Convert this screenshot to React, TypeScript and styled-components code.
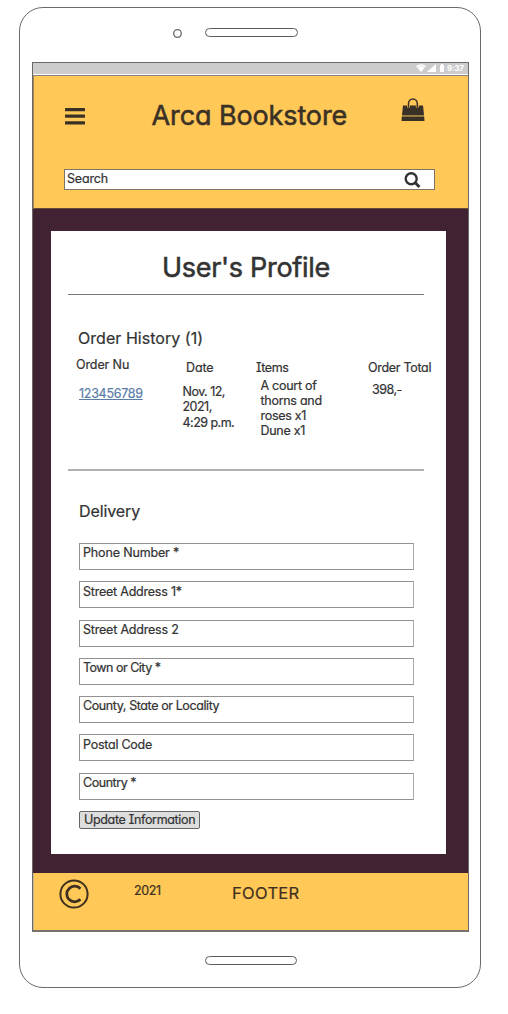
import React from 'react';
import styled, { createGlobalStyle } from 'styled-components';

const GlobalStyle = createGlobalStyle`
  *, *::before, *::after { box-sizing: border-box; }
  body {
    margin: 0;
    background: #fff;
    color: #333;
    font-family: Inter, "Liberation Sans", sans-serif;
    font-feature-settings: "cv11" 1, "cv08" 1, "calt" 0;
  }
`;

const Phone = styled.div`
  width: 462px;
  height: 981px;
  margin: 7px 0 0 19px;
  padding: 0 12px;
  border: 1px solid #6a6a6c;
  border-radius: 24px;
  background: #fff;
  display: flex;
  flex-direction: column;
`;

const TopHardware = styled.div`
  height: 54px;
  flex: none;
  display: flex;
  align-items: flex-start;
  padding: 20px 0 0 141px;
`;

const CameraIcon = styled.svg`
  width: 9px;
  height: 9px;
  margin-top: 1px;
`;

const Slot = styled.span<{ $w: number }>`
  width: ${p => p.$w}px;
  height: 9px;
  border: 1px solid #5c5c5c;
  border-radius: 5px;
`;

const Speaker = styled(Slot)`
  margin-left: 23px;
`;

const BottomHardware = styled.div`
  padding: 24px 0 0 173px;
  display: flex;
`;

const Screen = styled.div`
  width: 437px;
  height: 870px;
  flex: none;
  display: flex;
  flex-direction: column;
  border: 1px solid #6b6764;
  border-bottom: 2px solid #77736a;
`;

const StatusBar = styled.div`
  height: 13px;
  flex: none;
  display: flex;
  align-items: flex-start;
  justify-content: flex-end;
  padding-right: 4px;
  background: #ccc;
  border-bottom: 1px solid #85837e;
  box-shadow: inset 0 -1px #fff;
`;

const Clock = styled.span`
  width: 17px;
  margin-left: 3px;
  color: #fff;
  font-size: 8px;
  line-height: 10px;
  font-weight: 700;
  letter-spacing: -0.3px;
  white-space: nowrap;
`;

const Header = styled.header`
  height: 133px;
  flex: none;
  background: #ffc857;
  border-left: 1px solid #a08b60;
  border-bottom: 1px solid #6b4a3a;
`;

const HeaderRow = styled.div`
  display: flex;
  height: 93px;
  padding-left: 31px;
`;

const MenuIcon = styled.svg`
  width: 20px;
  height: 17px;
  margin-top: 32px;
`;

const BagIcon = styled.svg`
  width: 24px;
  height: 24px;
  margin: 22px 0 0 auto;
`;

const BagSlot = styled.div`
  margin: 0 43px 0 auto;
  display: flex;
`;

const Txt = styled.span<{ $size?: number; $ls?: number; $lh?: number }>`
  display: block;
  font-size: ${p => p.$size ?? 12.5}px;
  line-height: ${p => p.$lh ?? 15}px;
  letter-spacing: ${p => p.$ls ?? 0}px;
  white-space: nowrap;
  -webkit-text-stroke: ${p => ((p.$size ?? 0) > 20 ? 0.55 : 0.22)}px currentColor;
`;

const Brand = styled(Txt)`
  margin: 23px 0 0 66.6px;
  color: #3a3126;
`;

const SearchBox = styled.div`
  display: flex;
  justify-content: space-between;
  width: 371px;
  height: 21px;
  margin-left: 30px;
  padding: 1px 13px 0 2px;
  background: #fff;
  border: 1px solid #7d7564;
`;

const Main = styled.main`
  height: 664px;
  flex: none;
  padding: 22px 22px 19px 18px;
  background: #402233;
`;

const Card = styled.section`
  width: 395px;
  height: 623px;
  background: #fff;
  display: flex;
  flex-direction: column;
`;

const PageTitle = styled(Txt)`
  margin: 21px 0 0 111px;
`;

const Rule = styled.hr<{ $top: number; $light?: boolean }>`
  width: 356px;
  height: ${p => (p.$light ? 2 : 1)}px;
  flex: none;
  margin: ${p => p.$top}px 0 0 17px;
  border: 0;
  background: ${p => (p.$light ? '#b0b0b0' : '#777')};
`;

const Orders = styled.div`
  height: 174px;
  padding: 33px 0 0 25px;
`;

const SectionTitle = styled(Txt)`
  margin-left: 2px;
`;

const OrderGrid = styled.div`
  display: grid;
  grid-template-columns: 106px 74px 112px 1fr;
  margin-top: 9px;
`;

const OrderColumn = styled.div<{ $top?: number; $head?: number; $gap: number; $indent?: number }>`
  display: flex;
  flex-direction: column;
  align-items: flex-start;
  gap: ${p => p.$gap}px;
  padding-top: ${p => p.$top ?? 3}px;
  & > :first-child { margin-left: ${p => p.$head ?? 0}px; }
  & > :last-child { margin-left: ${p => p.$indent ?? 0}px; }
`;

const OrderLink = styled(Txt)`
  color: #5a7da8;
  text-decoration: underline;
  text-decoration-thickness: 1px;
  text-underline-offset: 1px;
`;

const Delivery = styled.form`
  padding: 30px 0 0 28px;
  display: flex;
  flex-direction: column;
`;

const Fields = styled.div`
  margin-top: 22px;
  display: flex;
  flex-direction: column;
  gap: 11.3px;
`;

const Field = styled.div`
  width: 334.5px;
  height: 27px;
  padding: 1.3px 0 0 3px;
  border: 1px solid #929292;
  border-right-color: #aaa;
`;

const UpdateButton = styled.button`
  width: 121px;
  height: 18px;
  margin-top: 11px;
  padding: 0 0 0 4px;
  border: 1px solid #666;
  border-radius: 2px;
  background: #ddd;
  color: #333;
  font-family: inherit;
  font-feature-settings: inherit;
  text-align: left;
`;

const Footer = styled.footer`
  flex: 1;
  display: flex;
  align-items: flex-start;
  border-left: 1px solid #c9b98f;
  padding-left: 25px;
  background: #ffc857;
  color: #3e2f20;
`;

const CopyrightIcon = styled.svg`
  width: 30px;
  height: 30px;
  margin-top: 6px;
`;

const Year = styled(Txt)`
  width: 98px;
  margin: 10px 0 0 45px;
`;

const FooterLabel = styled(Txt)`
  margin-top: 10px;
`;

const fields: { label: string; ls: number }[] = [
  { label: 'Phone Number *', ls: -0.15 },
  { label: 'Street Address 1*', ls: -0.22 },
  { label: 'Street Address 2', ls: -0.2 },
  { label: 'Town or City *', ls: -0.5 },
  { label: 'County, State or Locality', ls: -0.4 },
  { label: 'Postal Code', ls: -0.25 },
  { label: 'Country *', ls: -0.45 },
];

export default function App() {
  return (
    <>
      <GlobalStyle />
      <Phone>
        <TopHardware>
          <CameraIcon viewBox="0 0 9 9" fill="none" stroke="#666">
            <circle cx="4.5" cy="4.5" r="3.8" strokeWidth="1.3" />
          </CameraIcon>
          <Speaker $w={93} />
        </TopHardware>
        <Screen>
          <StatusBar>
            <svg width="28" height="10" viewBox="0 0 28 10" fill="#fff">
              <path d="M0 3Q5-.6 10 3L5 9Z" />
              <path d="M1.2 4.2Q5 1.5 8.8 4.2" fill="none" stroke="#ccc" strokeWidth=".5" />
              <path d="M11 9H20V1Z" />
              <path d="M24 2h1V1h2v1h1v7h-4Z" />
            </svg>
            <Clock>9:37</Clock>
          </StatusBar>
          <Header>
            <HeaderRow>
              <MenuIcon viewBox="0 0 20 17" fill="#3a3126">
                <rect width="20" height="3.2" rx=".5" />
                <rect y="6.6" width="20" height="3.2" rx=".5" />
                <rect y="13.2" width="20" height="3.2" rx=".5" />
              </MenuIcon>
              <Brand $size={27} $lh={34} $ls={-0.12}>Arca Bookstore</Brand>
              <BagSlot>
                <BagIcon viewBox="0 0 24 24">
                  <path d="M2 7.5H22L23 17H1Z" fill="#3a3126" />
                  <path d="M.8 18.5H23.2L23.5 23H.5Z" fill="#3a3126" />
                  <path d="M1 17.3H23v1H1Z" fill="#77643c" />
                  <path d="M7.5 9.5V5.5a4.3 4.5 0 0 1 8.8 0V9.5" fill="none" stroke="#ffc857" strokeWidth="2.9" />
                  <path d="M7.5 9.5V5.5a4.3 4.5 0 0 1 8.8 0V9.5" fill="none" stroke="#3a3126" strokeWidth="1.5" />
                </BagIcon>
              </BagSlot>
            </HeaderRow>
            <SearchBox>
              <Txt $ls={-0.15}>Search</Txt>
              <svg width="17" height="18" viewBox="0 -1 17 18" fill="none" stroke="#333">
                <circle cx="7.2" cy="6.7" r="5.5" strokeWidth="2.4" />
                <path d="M11.2 10.7L15.5 15" strokeWidth="2.9" />
              </svg>
            </SearchBox>
          </Header>
          <Main>
            <Card>
              <PageTitle $size={27} $lh={32} $ls={-0.3}>User's Profile</PageTitle>
              <Rule $top={10} />
              <Orders>
                <SectionTitle $size={16} $lh={20} $ls={0.04}>Order History (1)</SectionTitle>
                <OrderGrid>
                  <OrderColumn $top={0} $gap={14} $indent={3}>
                    <Txt $ls={-0.1}>Order Nu</Txt>
                    <OrderLink $ls={-0.28}>123456789</OrderLink>
                  </OrderColumn>
                  <OrderColumn $gap={9} $head={4} $indent={0.5}>
                    <Txt $ls={-0.1}>Date</Txt>
                    <Txt $lh={15.3} $ls={-0.52}>Nov. 12,<br />2021,<br />4:29 p.m.</Txt>
                  </OrderColumn>
                  <OrderColumn $gap={3} $indent={4.5}>
                    <Txt $ls={-0.4}>Items</Txt>
                    <Txt $ls={-0.28}>A court of<br />thorns and<br />roses x1<br />Dune x1</Txt>
                  </OrderColumn>
                  <OrderColumn $gap={7} $indent={4}>
                    <Txt $ls={-0.3}>Order Total</Txt>
                    <Txt $ls={-0.5}>398,-</Txt>
                  </OrderColumn>
                </OrderGrid>
              </Orders>
              <Rule $top={0} $light />
              <Delivery>
                <Txt $size={16} $lh={20} $ls={-0.1}>Delivery</Txt>
                <Fields>
                  {fields.map(f => (
                    <Field key={f.label}><Txt $ls={f.ls}>{f.label}</Txt></Field>
                  ))}
                </Fields>
                <UpdateButton type="button"><Txt $ls={-0.33}>Update Information</Txt></UpdateButton>
              </Delivery>
            </Card>
          </Main>
          <Footer>
            <CopyrightIcon viewBox="0 0 30 30" fill="none" stroke="#3e3020">
              <circle cx="15" cy="15" r="13.6" strokeWidth="2" />
              <path d="M21.4 9.8A7.8 7.8 0 1 0 21.4 20.2" strokeWidth="2.8" />
            </CopyrightIcon>
            <Year $ls={-0.4}>2021</Year>
            <FooterLabel $size={16.5} $lh={20} $ls={0.3}>FOOTER</FooterLabel>
          </Footer>
        </Screen>
        <BottomHardware><Slot $w={92} /></BottomHardware>
      </Phone>
    </>
  );
}
